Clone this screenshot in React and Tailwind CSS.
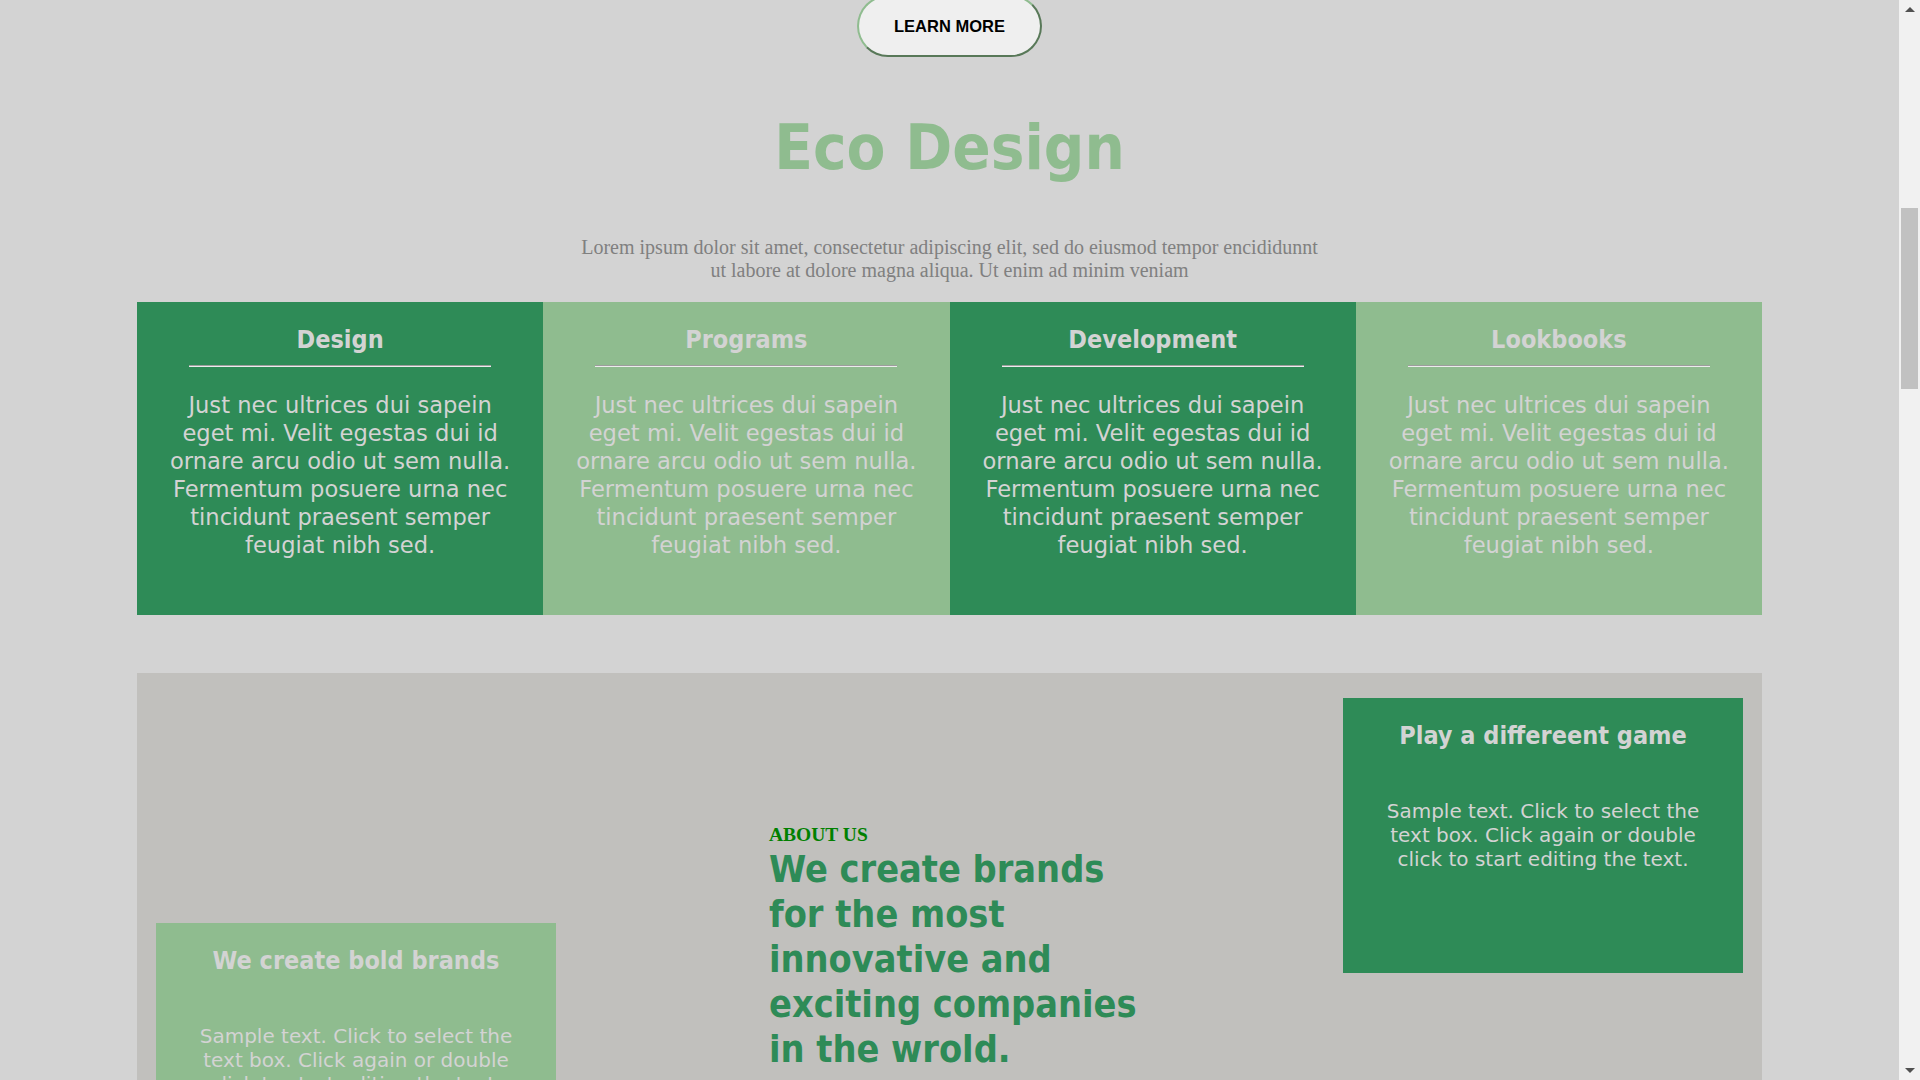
import React from "react";

const features = [
  { title: "Design", dark: true },
  { title: "Programs", dark: false },
  { title: "Development", dark: true },
  { title: "Lookbooks", dark: false },
];

const body = "Just nec ultrices dui sapein eget mi. Velit egestas dui id ornare arcu odio ut sem nulla. Fermentum posuere urna nec tincidunt praesent semper feugiat nibh sed.";
const sample = "Sample text. Click to select the text box. Click again or double click to start editing the text.";

const heading = "font-['DejaVu_Sans_Condensed','DejaVu_Sans',sans-serif] font-bold";

function TextBox({ title, dark, className = "" }) {
  return (
    <div className={`${dark ? "bg-[#2e8b57]" : "bg-[#8fbc8f]"} h-[275px] w-[400px] px-[25px] pt-[23px] text-center text-[#d3d3d3] ${className}`}>
      <h3 className={`${heading} text-[25px] leading-[29px]`}>{title}</h3>
      <p className="mt-[49px] text-[20px] leading-[24px]">{sample}</p>
    </div>
  );
}

export default function App() {
  return (
    <div className="flex h-screen overflow-hidden bg-[#d3d3d3] font-['DejaVu_Sans',sans-serif]">
      <main className="flex-1 overflow-hidden">
        {/* Hero tail */}
        <div className="mt-[-5px] flex justify-center">
          <button className="rounded-full border-2 border-t-[#8fbc8f] border-l-[#8fbc8f] border-b-[#587858] border-r-[#587858] bg-[#efefef] px-[35px] py-[20px] font-['Liberation_Sans',Arial,sans-serif] text-[16.5px] font-bold leading-[18px] text-black">
            LEARN MORE
          </button>
        </div>

        <h1 className={`${heading} mt-[54px] text-center text-[63px] leading-[73px] text-[#8fbc8f]`}>Eco Design</h1>

        <p className="mx-auto mt-[52px] max-w-[750px] text-center font-['Liberation_Serif','Times_New_Roman',serif] text-[20px] leading-[23px] text-[#808080]">
          Lorem ipsum dolor sit amet, consectetur adipiscing elit, sed do eiusmod tempor encididunnt ut labore at dolore magna aliqua. Ut enim ad minim veniam
        </p>

        {/* Feature cards */}
        <div className="mx-[137px] mt-[20px] grid grid-cols-4">
          {features.map((f) => (
            <div key={f.title} className={`${f.dark ? "bg-[#2e8b57]" : "bg-[#8fbc8f]"} h-[313px] px-[24px] pt-[23px] text-center text-[#d3d3d3]`}>
              <h2 className={`${heading} text-[25px] leading-[29px]`}>{f.title}</h2>
              <div className="mx-auto mt-[11px] w-[302px] border-t border-b border-t-[#9d9d9d] border-b-[#ececec]" />
              <p className="mt-[24px] text-[22.6px] leading-[28px]">{body}</p>
            </div>
          ))}
        </div>

        {/* About */}
        <section className="mx-[137px] mt-[58px] grid h-[550px] grid-cols-[400px_1fr_400px] bg-[#c1c0bd] px-[19px] pt-[25px] pb-[25px]">
          <TextBox title="We create bold brands" className="self-end" />
          <div className="self-center pl-[213px]">
            <div className="font-['Liberation_Serif','Times_New_Roman',serif] text-[19.5px] font-bold leading-[22.4px] text-[#008000]">ABOUT US</div>
            <h2 className={`${heading} w-[385px] text-[37.5px] leading-[45px] text-[#2e8b57]`}>
              We create brands for the most innovative and exciting companies in the wrold.
            </h2>
          </div>
          <TextBox title="Play a differeent game" dark className="self-start" />
        </section>
      </main>

      {/* Scrollbar */}
      <div className="flex w-[21px] flex-col items-center bg-[#f1f1f1]">
        <div className="mt-[7px] h-0 w-0 border-x-[5px] border-b-[5px] border-x-transparent border-b-[#505050]" />
        <div className="mt-[196px] h-[181px] w-[17px] bg-[#c1c1c1]" />
        <div className="flex-1" />
        <div className="mb-[7px] h-0 w-0 border-x-[5px] border-t-[5px] border-x-transparent border-t-[#505050]" />
      </div>
    </div>
  );
}
